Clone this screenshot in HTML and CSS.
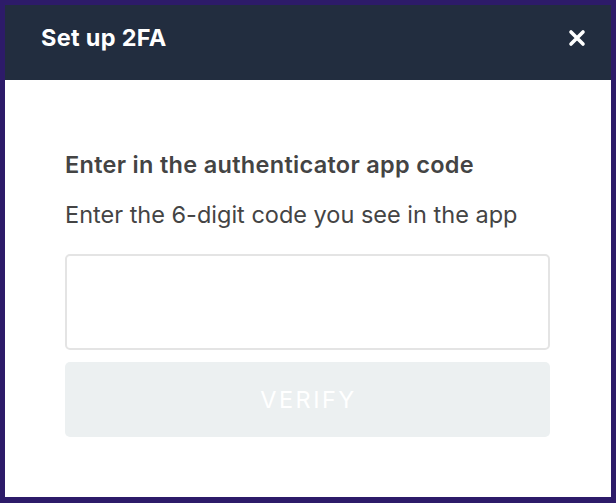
FILE: index.html
```html
<!DOCTYPE html>
<html>
<head>
<meta charset="utf-8">
<link rel="stylesheet" href="styles.css">
</head>
<body>
<div class="modal">
  <div class="modal-header">
    <h1 class="modal-title">Set up 2FA</h1>
    <button class="close" aria-label="Close">
      <svg width="18" height="18" viewBox="0 0 18 18"><path d="M3 3 L15 15 M15 3 L3 15" stroke="#fff" stroke-width="3.6" stroke-linecap="round"/></svg>
    </button>
  </div>
  <div class="modal-body">
    <h2 class="heading">Enter in the authenticator app code</h2>
    <p class="hint">Enter the 6-digit code you see in the app</p>
    <input class="code-input" type="text">
    <button class="verify" disabled>VERIFY</button>
  </div>
</div>
</body>
</html>
```

FILE: styles.css
```css
html, body {
  margin: 0;
  padding: 0;
  height: 100%;
}
body {
  background: #2d1b69;
  padding: 5px 5px 6px 5px;
  box-sizing: border-box;
  font-family: "Inter", "Noto Sans", sans-serif;
}
.modal {
  background: #fff;
  height: 100%;
  display: flex;
  flex-direction: column;
}
.modal-header {
  background: #222d3f;
  height: 75px;
  display: flex;
  align-items: flex-start;
  justify-content: space-between;
  padding: 18px 25px 0 36px;
  box-sizing: border-box;
}
.modal-title {
  margin: 0;
  color: #fff;
  font-size: 23.5px;
  line-height: 29px;
  font-weight: 700;
  letter-spacing: 0.3px;
}
.close {
  background: none;
  border: none;
  padding: 0;
  margin-top: 6px;
  width: 18px;
  height: 18px;
  display: flex;
  cursor: pointer;
}
.modal-body {
  padding: 71px 61px 0 60px;
  display: flex;
  flex-direction: column;
}
.heading {
  margin: 0;
  font-size: 23.5px;
  font-weight: 600;
  color: #444;
  line-height: 28px;
  letter-spacing: 0.3px;
}
.hint {
  margin: 22px 0 0 0;
  font-size: 23.5px;
  font-weight: 400;
  color: #444;
  line-height: 28px;
}
.code-input {
  margin-top: 25px;
  height: 96px;
  border: 2px solid #e4e4e4;
  border-radius: 5px;
  box-sizing: border-box;
  font-size: 20px;
  padding: 0 14px;
  font-family: inherit;
  outline: none;
}
.verify {
  margin-top: 12px;
  height: 75px;
  border: none;
  border-radius: 5px;
  background: #ecf0f1;
  color: #fff;
  font-family: inherit;
  font-size: 23.5px;
  letter-spacing: 2.5px;
  font-weight: 400;
  padding: 0 0 0 2px;
}
```
